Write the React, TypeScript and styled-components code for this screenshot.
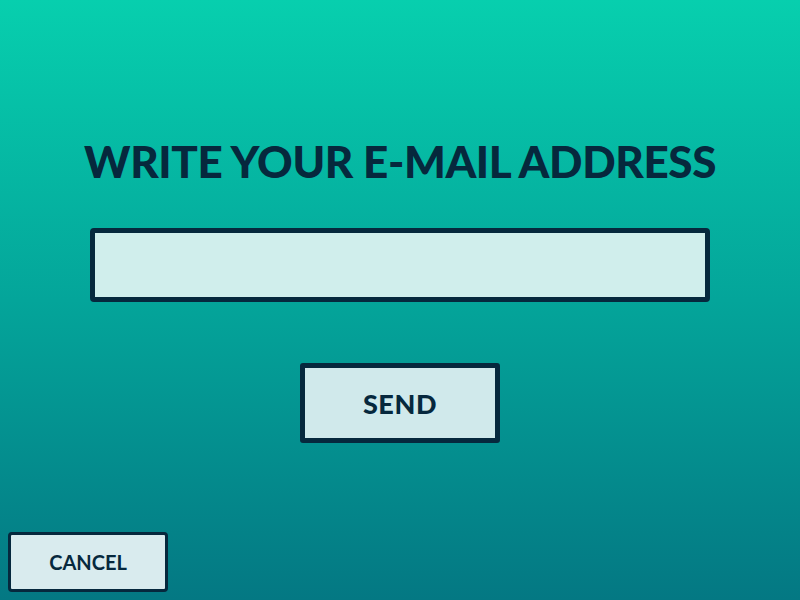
import React from 'react'
import styled, { createGlobalStyle } from 'styled-components'

const ink = '#06283d'

const GlobalStyle = createGlobalStyle`
	html, body {
		margin: 0;
		padding: 0;
		height: 100%;
	}
	body {
		font-family: Lato, 'Open Sans', sans-serif;
		color: ${ink};
	}
	#root {
		height: 100%;
	}
`

const Screen = styled.div`
	box-sizing: border-box;
	height: 600px;
	display: flex;
	flex-direction: column;
	align-items: center;
	padding: 0 8px 8px;
	background: linear-gradient(180deg, #07cfae 0%, #04a59a 50%, #047883 100%);
`

const Title = styled.h1`
	margin: 138px 0 0;
	font-size: 44px;
	line-height: 46px;
	font-weight: 900;
	letter-spacing: -0.4px;
	text-transform: uppercase;
`

const EmailInput = styled.input`
	box-sizing: border-box;
	margin-top: 44px;
	width: 620px;
	height: 74px;
	border: 5px solid ${ink};
	border-radius: 4px;
	background: #d0eeec;
	font: 700 26px Lato, sans-serif;
	color: ${ink};
	padding: 0 16px;
	outline: none;
`

const Button = styled.button<{ $small?: boolean }>`
	box-sizing: border-box;
	display: flex;
	align-items: center;
	justify-content: center;
	width: ${p => (p.$small ? '160px' : '200px')};
	height: ${p => (p.$small ? '60px' : '80px')};
	border: ${p => (p.$small ? '3px' : '5px')} solid ${ink};
	border-radius: ${p => (p.$small ? '4px' : '3px')};
	background: ${p => (p.$small ? '#d9ebee' : '#d0e9eb')};
	color: ${ink};
	font-family: Lato, sans-serif;
	font-weight: ${p => (p.$small ? 700 : 900)};
	font-size: ${p => (p.$small ? '20px' : '27px')};
	letter-spacing: ${p => (p.$small ? '0' : '0.6px')};
	padding: 0;
	cursor: pointer;
`

const SendButton = styled(Button)`
	margin-top: 61px;
`

const CancelButton = styled(Button)`
	margin-top: auto;
	align-self: flex-start;
`

export default function App() {
	return (
		<>
			<GlobalStyle />
			<Screen>
				<Title>Write your e-mail address</Title>
				<EmailInput type="email" aria-label="E-mail address" />
				<SendButton>SEND</SendButton>
				<CancelButton $small>CANCEL</CancelButton>
			</Screen>
		</>
	)
}
